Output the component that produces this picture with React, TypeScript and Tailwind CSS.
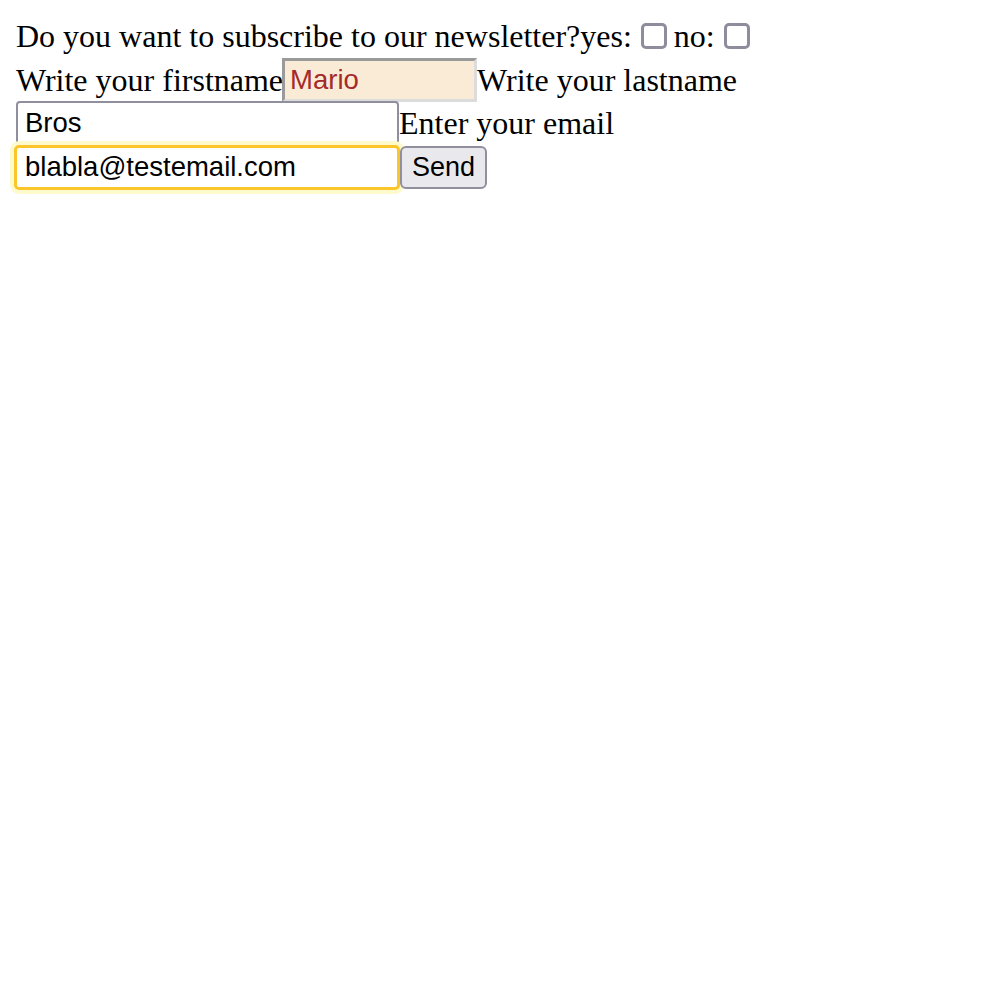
export default function App() {
  return (
    <div className="min-h-screen bg-white px-4 pt-[14px] font-['Liberation_Serif',serif] text-[32px] leading-none text-black">
      {/* Newsletter question */}
      <div className="flex h-[44px] items-center">
        <span>Do you want to subscribe to our newsletter?</span>
        <span>yes:</span>
        <span className="ml-[9px] mr-[7px] h-[26px] w-[26px] rounded-[5px] border-[3px] border-[#8f8d9b] bg-white" />
        <span>no:</span>
        <span className="ml-[9px] h-[26px] w-[26px] rounded-[5px] border-[3px] border-[#8f8d9b] bg-white" />
      </div>

      {/* Firstname / lastname */}
      <div className="flex h-[43px] items-center">
        <span>Write your firstname</span>
        <input
          readOnly
          value="Mario"
          className="-ml-[1px] h-[44px] w-[195px] border-[3px] border-b-[#dcdcdc] border-l-[#9a9a9a] border-r-[#dcdcdc] border-t-[#9a9a9a] bg-[#faebd7] px-[5px] font-['Liberation_Sans',sans-serif] text-[27.5px] text-[#a52a2a] outline-none"
        />
        <span>Write your lastname</span>
      </div>

      <div className="flex h-[44px] items-center">
        <input
          readOnly
          value="Bros"
          className="h-[44px] w-[383px] rounded-[4px] border-2 border-[#8f8f9d] bg-white px-[7px] font-['Liberation_Sans',sans-serif] text-[27.5px] text-black outline-none"
        />
        <span>Enter your email</span>
      </div>

      {/* Email + send */}
      <div className="flex h-[44px] items-center">
        <input
          readOnly
          value="blabla@testemail.com"
          className="-ml-[2px] h-[45px] w-[386px] rounded-[5px] border-[3px] border-[#fcc52a] bg-white px-[8px] font-['Liberation_Sans',sans-serif] text-[27.5px] text-black shadow-[0_0_0_4px_#fffacb] outline-none"
        />
        <button className="h-[43px] w-[87px] rounded-[6px] border-2 border-[#8f8f9d] bg-[#e9e9ed] font-['Liberation_Sans',sans-serif] text-[27px] text-black">
          Send
        </button>
      </div>
    </div>
  );
}
